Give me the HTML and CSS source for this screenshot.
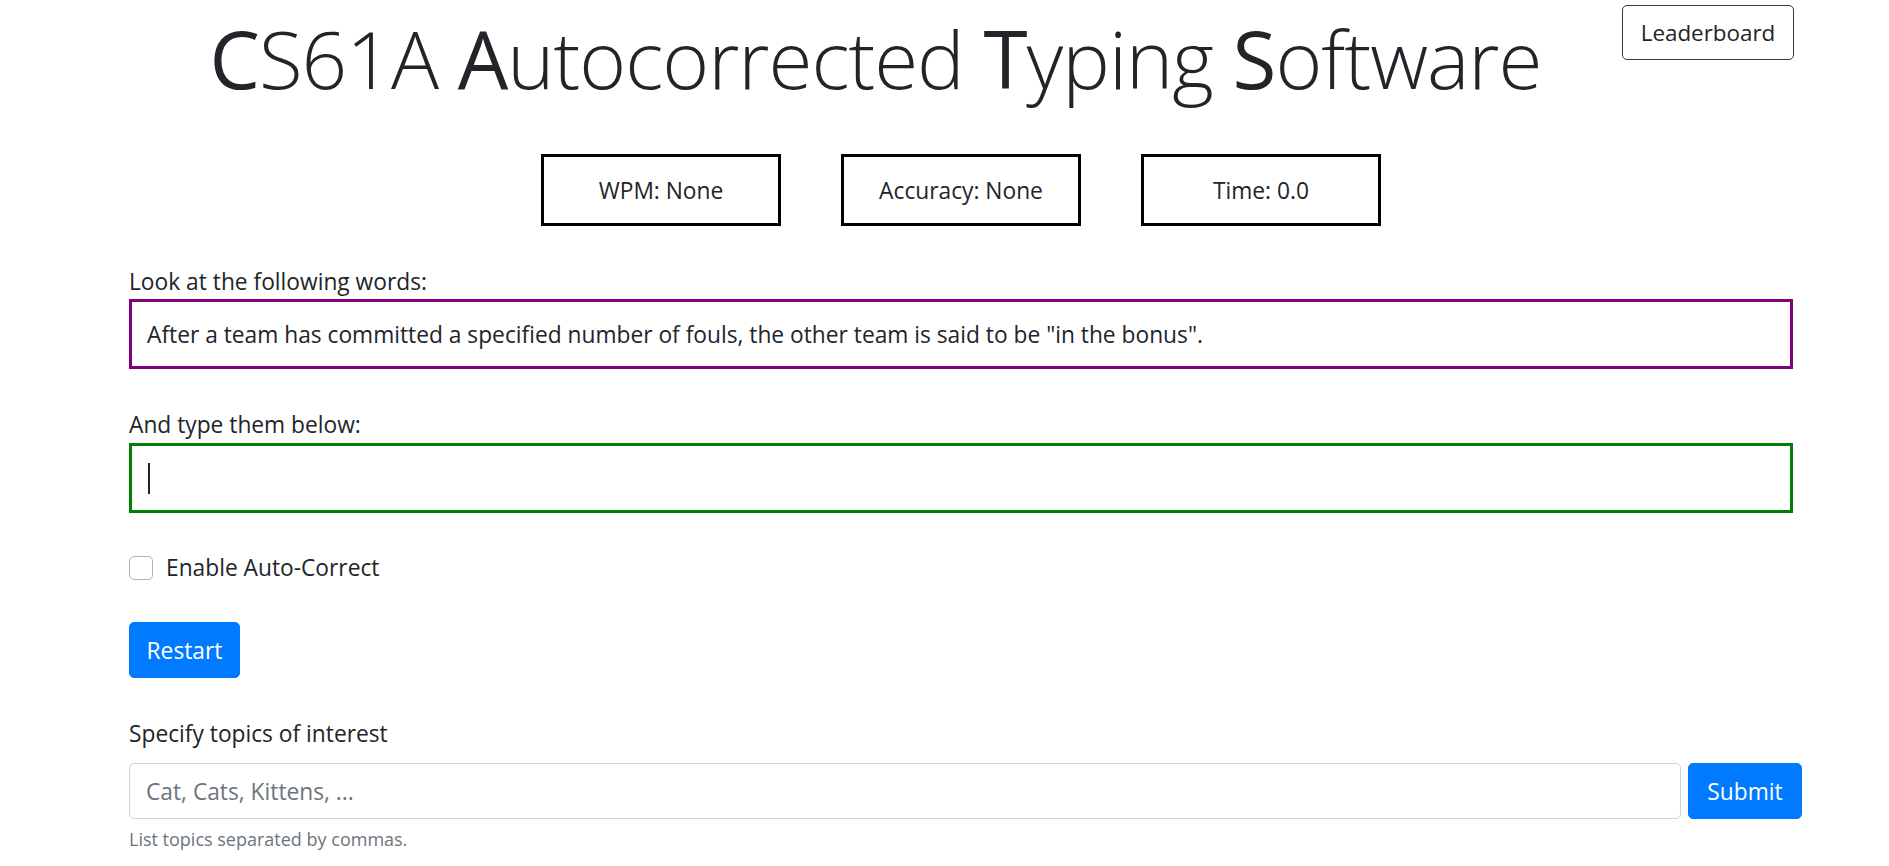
FILE: index.html
```html
<!DOCTYPE html>
<html lang="en">
<head>
<meta charset="utf-8">
<title>CS61A Autocorrected Typing Software</title>
<link rel="stylesheet" href="styles.css">
</head>
<body>
<div class="page">
  <header class="top">
    <h1 class="title"><span class="cap">C</span>S61A <span class="cap">A</span>utocorrected <span class="cap">T</span>yping <span class="cap">S</span>oftware</h1>
    <button class="btn-outline">Leaderboard</button>
  </header>

  <div class="stats">
    <div class="stat">WPM: None</div>
    <div class="stat">Accuracy: None</div>
    <div class="stat">Time: 0.0</div>
  </div>

  <label class="field-label">Look at the following words:</label>
  <div class="prompt">After a team has committed a specified number of fouls, the other team is said to be "in the bonus".</div>

  <label class="field-label second">And type them below:</label>
  <div class="typing"><span class="caret"></span></div>

  <div class="check-row">
    <span class="checkbox"></span>
    <span class="check-label">Enable Auto-Correct</span>
  </div>

  <button class="btn-primary restart">Restart</button>

  <label class="field-label topics">Specify topics of interest</label>
  <div class="topic-row">
    <div class="topic-input">Cat, Cats, Kittens, ...</div>
    <button class="btn-primary submit">Submit</button>
  </div>
  <div class="help">List topics separated by commas.</div>
</div>
</body>
</html>
```

FILE: styles.css
```css
html, body {
  margin: 0;
  padding: 0;
  background: #fff;
}
body {
  font-family: "Open Sans", "Noto Sans", sans-serif;
  font-size: 22.75px;
  color: #212529;
  overflow: hidden;
}
.page {
  margin-left: 129px;
  width: 1673px;
  display: flex;
  flex-direction: column;
  align-items: flex-start;
}
.top {
  display: flex;
  width: 1665px;
  align-items: flex-start;
  height: 154px;
}
.title {
  flex: 1;
  margin: 0;
  text-align: center;
  font-weight: 300;
  font-size: 80px;
  line-height: 116px;
  letter-spacing: -1px;
  color: #212529;
}
.title .cap {
  font-weight: 500;
}
.btn-outline {
  margin-top: 5px;
  width: 172px;
  height: 55px;
  background: #fff;
  border: 1px solid #343a40;
  border-radius: 5px;
  font-family: inherit;
  font-size: 22.4px;
  color: #212529;
  padding: 0;
}
.stats {
  width: 1664px;
  display: flex;
  justify-content: center;
  gap: 60px;
}
.stat {
  box-sizing: border-box;
  width: 240px;
  height: 72px;
  border: 3px solid #000;
  display: flex;
  align-items: center;
  justify-content: center;
}
.field-label {
  display: block;
  margin-top: 41px;
  line-height: 30px;
  height: 30px;
}
.prompt, .typing {
  box-sizing: border-box;
  width: 1664px;
  height: 70px;
  border: 3px solid #800080;
  margin-top: 2px;
  padding: 0 15px;
  display: flex;
  align-items: center;
}
.typing {
  border-color: #008000;
  margin-top: 3px;
  padding: 0 16px;
}
.caret {
  display: block;
  width: 2px;
  height: 31px;
  background: #212529;
}
.check-row {
  margin-top: 43px;
  display: flex;
  align-items: center;
  height: 24px;
}
.checkbox {
  box-sizing: border-box;
  width: 24px;
  height: 24px;
  border: 1px solid #adb5bd;
  border-radius: 5px;
  background: #fff;
}
.check-label {
  margin-left: 13px;
  line-height: 30px;
}
.btn-primary {
  background: #007bff;
  color: #fff;
  border: 1px solid #007bff;
  border-radius: 5px;
  font-family: inherit;
  font-size: 22.75px;
  height: 56px;
  padding: 0;
}
.restart {
  margin-top: 42px;
  width: 111px;
}
.field-label.topics {
  margin-top: 41px;
}
.topic-row {
  margin-top: 14px;
  width: 1673px;
  display: flex;
  gap: 7px;
}
.topic-input {
  box-sizing: border-box;
  flex: 1;
  height: 56px;
  border: 1px solid #ced4da;
  border-radius: 5px;
  padding: 0 16px;
  color: #6c757d;
  display: flex;
  align-items: center;
}
.submit {
  width: 114px;
}
.help {
  margin-top: 7px;
  font-size: 18px;
  line-height: 26px;
  color: #6c757d;
}
```
